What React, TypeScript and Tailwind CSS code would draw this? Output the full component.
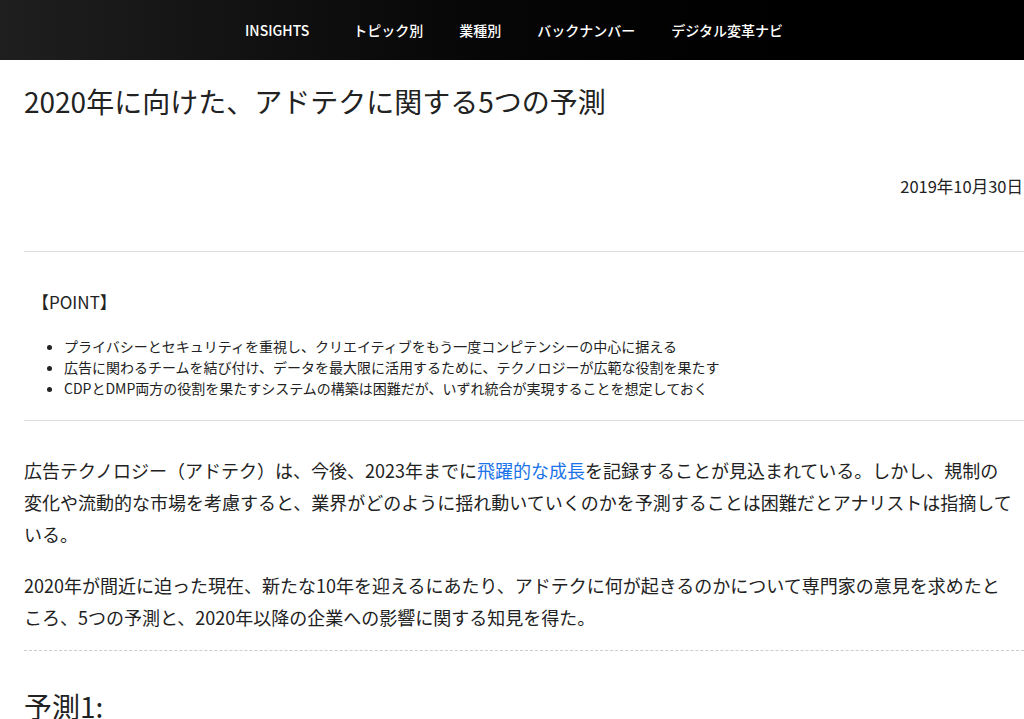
export default function App() {
  const font = { fontFamily: '"Noto Sans CJK JP", "Noto Sans", sans-serif' };
  return (
    <div className="h-[719px] overflow-hidden bg-white text-[#222]" style={font}>
      <div className="h-[60px] bg-gradient-to-r from-[#1f1f1f] to-[#000] flex items-center justify-center gap-9 text-white text-[14px] font-medium pl-[4px]">
        <span className="mr-[8px]">INSIGHTS</span>
        <span>トピック別</span>
        <span>業種別</span>
        <span>バックナンバー</span>
        <span>デジタル変革ナビ</span>
      </div>
      <div className="pl-[24px]">
        <h1 className="text-[28px] leading-[36px] mt-[23px] text-[#222]">2020年に向けた、アドテクに関する5つの予測</h1>
        <div className="text-right text-[16.5px] mt-[55px] pr-[1px]">2019年10月30日</div>
        <hr className="mt-[52px] border-t border-[#ddd]" />
        <div className="pl-[8px] mt-[38px] text-[17px] leading-[24px]">【POINT】</div>
        <ul className="mt-[22px] pl-[40px] list-disc text-[14px] leading-[21px]">
          <li>プライバシーとセキュリティを重視し、クリエイティブをもう一度コンピテンシーの中心に据える</li>
          <li>広告に関わるチームを結び付け、データを最大限に活用するために、テクノロジーが広範な役割を果たす</li>
          <li>CDPとDMP両方の役割を果たすシステムの構築は困難だが、いずれ統合が実現することを想定しておく</li>
        </ul>
        <hr className="mt-[21px] border-t border-[#ddd]" />
        <p className="mt-[33px] text-[18px] leading-[32px] pr-[8px]">
          広告テクノロジー（アドテク）は、今後、2023年までに<span className="text-[#1a73e8]">飛躍的な成長</span>を記録することが見込まれている。しかし、規制の変化や流動的な市場を考慮すると、業界がどのように揺れ動いていくのかを予測することは困難だとアナリストは指摘している。
        </p>
        <p className="mt-[19px] text-[18px] leading-[32px] pr-[8px]">
          2020年が間近に迫った現在、新たな10年を迎えるにあたり、アドテクに何が起きるのかについて専門家の意見を求めたところ、5つの予測と、2020年以降の企業への影響に関する知見を得た。
        </p>
        <hr className="mt-[17px] border-t border-dashed border-[#ccc]" />
        <h2 className="mt-[37px] text-[28px] leading-[36px]">予測1:</h2>
      </div>
    </div>
  );
}
